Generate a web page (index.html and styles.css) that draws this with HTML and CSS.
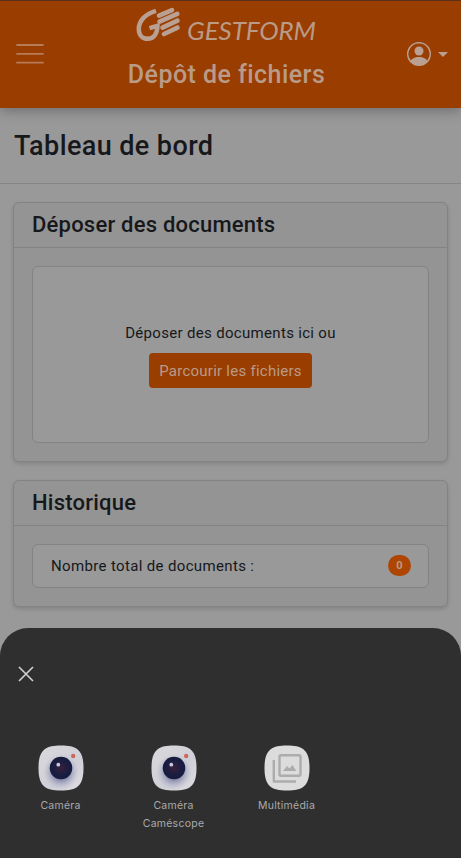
FILE: index.html
```html
<!DOCTYPE html>
<html lang="fr">
<head>
<meta charset="utf-8">
<title>Gestform - Dépôt de fichiers</title>
<link rel="stylesheet" href="styles.css">
</head>
<body>
<div class="screen">
  <header class="topbar">
    <svg class="menu" viewBox="0 0 28 22"><path d="M1 2h26M1 10.800h26M1 19.700h26"/></svg>
    <div class="brand">
      <div class="logo">
        <svg class="mark" viewBox="0 0 44 34">
          <path class="g" d="M19 2.800C8 6 1.800 13 1.800 21c0 6 3.700 9.800 8.700 9.800 6.500 0 9.800-5.300 10-13l-8 2.400"/>
          <path class="fingers" d="M22 7.700 35 2.200M22.500 13.600 40.300 5.800M25.500 19.600 40.500 12.700M27 26 40.500 19.700"/>
        </svg>
        <span class="logo-name">GESTFORM</span>
      </div>
      <div class="app-title">Dépôt de fichiers</div>
    </div>
    <div class="account">
      <svg class="user" viewBox="0 0 16 16"><path d="M11 6a3 3 0 1 1-6 0 3 3 0 0 1 6 0"/><path fill-rule="evenodd" d="M0 8a8 8 0 1 1 16 0A8 8 0 0 1 0 8m8-7a7 7 0 0 0-5.468 11.370C3.242 11.226 4.805 10 8 10s4.757 1.225 5.468 2.370A7 7 0 0 0 8 1"/></svg>
      <span class="caret"></span>
    </div>
  </header>
  <h1 class="page-title"><span>Tableau de bord</span></h1>
  <main class="content">
    <section class="card upload">
      <h2><span>Déposer des documents</span></h2>
      <div class="card-body">
        <div class="dropzone">
          <p>Déposer des documents ici ou</p>
          <button type="button"><span>Parcourir les fichiers</span></button>
        </div>
      </div>
    </section>
    <section class="card history">
      <h2><span>Historique</span></h2>
      <div class="card-body">
        <div class="count"><span class="count-label">Nombre total de documents :</span><span class="badge">0</span></div>
      </div>
    </section>
  </main>
  <div class="sheet">
    <svg class="close" viewBox="0 0 16 16"><path d="M1 1l14 14M15 1 1 15"/></svg>
    <div class="apps">
      <div class="app">
        <svg class="app-icon" viewBox="0 0 46 46">
          <defs>
            <linearGradient id="plate" x1="0" y1="0" x2="1" y2="1"><stop offset="0" stop-color="#dad9dc"/><stop offset=".6" stop-color="#cfcfd8"/><stop offset="1" stop-color="#dedde1"/></linearGradient>
            <radialGradient id="shade"><stop offset=".4" stop-color="#8184a8"/><stop offset="1" stop-color="#b8b9ce" stop-opacity="0"/></radialGradient>
            <radialGradient id="lens"><stop offset="0" stop-color="#34213f"/><stop offset=".5" stop-color="#251c3c"/><stop offset=".6" stop-color="#191e43"/><stop offset="1" stop-color="#171b3b"/></radialGradient>
            <g id="camera">
              <path fill="url(#plate)" d="M23 .500C39 .500 45.500 5 45.500 23S39 45.500 23 45.500.500 41 .500 23 7 .500 23 .500"/>
              <circle cx="23" cy="27" r="18" fill="url(#shade)"/>
              <circle cx="23" cy="23" r="11.300" fill="url(#lens)"/>
              <circle cx="20.300" cy="19.700" r="1.900" fill="#c3cae2"/>
              <circle cx="35.200" cy="11" r="2.200" fill="#cf6659"/>
            </g>
          </defs>
          <use href="#camera"/>
        </svg>
        <span>Caméra</span>
      </div>
      <div class="app">
        <svg class="app-icon" viewBox="0 0 46 46"><use href="#camera"/></svg>
        <span>Caméra<br>Caméscope</span>
      </div>
      <div class="app">
        <svg class="app-icon" viewBox="0 0 46 46">
          <path fill="#dcdcdc" d="M23 .500C39 .500 45.500 5 45.500 23S39 45.500 23 45.500.500 41 .500 23 7 .500 23 .500"/>
          <g fill="none" stroke="#acacac" stroke-width="2.400" stroke-linejoin="round"><rect x="15.500" y="10.300" width="21" height="20.500" rx="1.500"/><path d="M9.800 15v21.500H32"/></g>
          <path fill="#acacac" d="m19 26 4-5 2.400 2.500 3-3.500 4 6z"/>
        </svg>
        <span>Multimédia</span>
      </div>
    </div>
  </div>
</div>
</body>
</html>
```
FILE: styles.css
```css
* { box-sizing: border-box; }
body { margin: 0; background: #999; color: #16181b; font-family: Roboto, "Liberation Sans", sans-serif; }
h1, h2, p { margin: 0; font-weight: 500; white-space: nowrap; }
svg { display: block; flex: none; }
.screen { height: 858px; overflow: hidden; display: flex; flex-direction: column; }
.topbar { height: 108px; flex: none; display: flex; align-items: center; justify-content: space-between; padding: 0 13px 1px 16px; background: #993d00; border-top: 1px solid #5c3018; box-shadow: 0 3px 12px rgba(0, 0, 0, .28); }
.menu { width: 28px; height: 22px; fill: none; stroke: #b77b58; stroke-width: 1.800; stroke-linecap: round; }
.brand { align-self: stretch; display: flex; flex-direction: column; align-items: center; padding-top: 7px; margin-left: 2px; color: #b99b88; }
.logo { display: flex; height: 36px; gap: 6px; }
.mark { width: 44px; height: 34px; fill: none; stroke: #b9a093; overflow: visible; }
.g { stroke-width: 4.500; }
.fingers { stroke-width: 4.600; stroke-linecap: round; }
.logo-name { font: italic 26px/32px Lato, sans-serif; letter-spacing: -.1px; padding-top: 6px; }
.app-title { font-size: 25px; font-weight: 500; line-height: 30px; letter-spacing: .45px; margin-top: 16px; white-space: nowrap; }
.account { display: flex; align-items: center; gap: 7px; }
.user { width: 24px; height: 24px; fill: #b9a093; }
.caret { border: 5px solid transparent; border-top-color: #b9a093; border-bottom: 0; }
.page-title { flex: none; height: 76px; border-bottom: 1px solid #858585; padding-left: 14px; font-size: 27px; line-height: 76px; letter-spacing: .4px; }
.content { display: flex; flex-direction: column; gap: 18px; padding: 18px 13px 0; flex: none; }
.card { border: 1px solid #838383; border-radius: 6px; background: #949494; box-shadow: 0 2px 4px rgba(0, 0, 0, .14); }
.upload { height: 260px; }
.history { height: 127px; }
.card h2 { height: 45px; padding-left: 18px; border-bottom: 1px solid #838383; font-size: 22px; line-height: 44px; letter-spacing: .22px; }
.card-body { padding: 18px; }
.dropzone { height: 177px; border: 1px solid #838383; border-radius: 6px; background: #999; display: flex; flex-direction: column; align-items: center; padding-top: 55px; }
.dropzone p { font-size: 15px; font-weight: 400; line-height: 22px; letter-spacing: .32px; }
.dropzone button { width: 163px; height: 35px; margin-top: 9px; padding: 0; border: 0; border-radius: 4px; background: #993d00; color: #b99b88; font: 15px Roboto, sans-serif; letter-spacing: .25px; white-space: nowrap; }
.count { height: 44px; border: 1px solid #838383; border-radius: 6px; background: #999; display: flex; align-items: center; justify-content: space-between; padding: 0 17px 1px 18px; font-size: 15px; letter-spacing: .35px; }
.badge { width: 23px; height: 21px; border-radius: 11px; background: #ae4500; color: #b99b88; font-size: 11px; font-weight: 700; line-height: 21px; letter-spacing: 0; text-align: center; }
.sheet { flex: 1; margin-top: 21px; border-radius: 28px 28px 0 0; background: #2f2f2f; }
.close { width: 16px; height: 16px; margin: 38px 0 0 18px; fill: none; stroke: #d2d2d2; stroke-width: 1.600; }
.apps { display: flex; margin: 63px 0 0 4px; }
.app { width: 113px; display: flex; flex-direction: column; align-items: center; gap: 6px; text-align: center; color: #aaa; font: 10.500px/17.500px Inter, sans-serif; letter-spacing: .25px; }
.app-icon { width: 46px; height: 46px; }
```
